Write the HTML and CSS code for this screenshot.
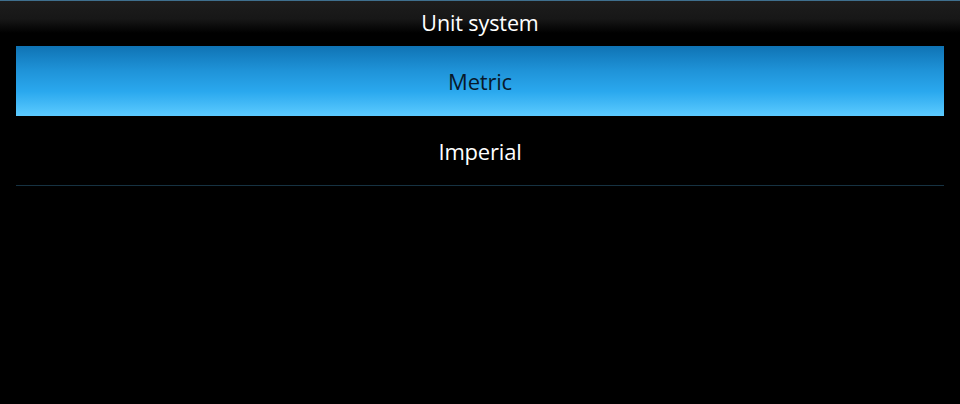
FILE: index.html
```html
<!DOCTYPE html>
<html>
<head>
<meta charset="utf-8">
<link rel="stylesheet" href="styles.css">
</head>
<body>
<div class="screen">
  <header class="titlebar">Unit system</header>
  <ul class="list">
    <li class="item selected">Metric</li>
    <li class="item">Imperial</li>
  </ul>
</div>
</body>
</html>
```
FILE: styles.css
```css
html, body {
  margin: 0;
  padding: 0;
  background: #000;
}
.screen {
  width: 960px;
  height: 404px;
  background: #000;
  font-family: "Open Sans", "Noto Sans", sans-serif;
  color: #fff;
  overflow: hidden;
}
.titlebar {
  height: 46px;
  box-sizing: border-box;
  border-top: 1px solid #3f6f8e;
  background: linear-gradient(to bottom, #1d1d1d 0px, #171717 18px, #000 32px, #000 46px);
  text-align: center;
  font-size: 21.5px;
  line-height: 43px;
  letter-spacing: -0.1px;
}
.list {
  list-style: none;
  margin: 0 16px;
  padding: 0;
}
.item {
  height: 69px;
  display: flex;
  align-items: center;
  justify-content: center;
  font-size: 22px;
  letter-spacing: -0.2px;
  border-bottom: 1px solid #163242;
}
.item.selected {
  height: 70px;
  border-bottom: none;
  color: #08182a;
  background: linear-gradient(to bottom, #0f73b4 0%, #1f93d8 35%, #2aa8ee 65%, #5ccbff 100%);
}
```
